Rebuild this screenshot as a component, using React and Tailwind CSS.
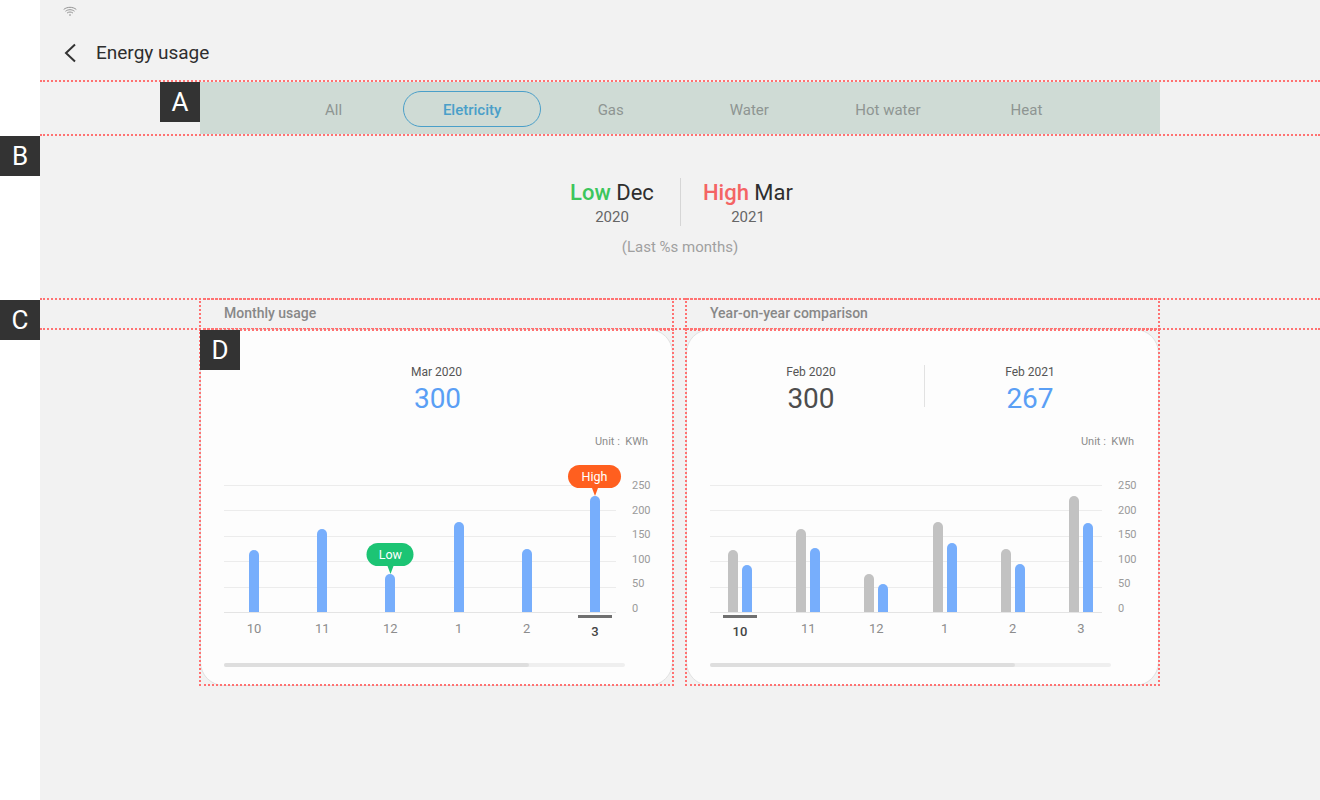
import React from 'react';

const tabs = ['All', 'Eletricity', 'Gas', 'Water', 'Hot water', 'Heat'];
const months = ['10', '11', '12', '1', '2', '3'];
const ticks = ['250', '200', '150', '100', '50', '0'];

// bar heights in px, measured up from the baseline
const usage = [62, 83, 38, 90, 63, 116];
const lastYear = [47, 64, 28, 69, 48, 89];

const Marker = ({ label, className, tailClass }) => (
  <div className="absolute bottom-full left-1/2 -translate-x-1/2 flex flex-col items-center">
    <div className={`h-[23px] rounded-full text-white text-[12.5px] leading-[23px] text-center ${className}`}>{label}</div>
    <div className={`w-0 h-0 border-x-[3px] border-x-transparent border-t-[8px] ${tailClass}`} />
  </div>
);

const Bar = ({ height, color, children }) => (
  <div className={`relative w-[10px] rounded-t-[5px] ${color}`} style={{ height }}>
    {children}
  </div>
);

const Chart = ({ selected, renderBars }) => (
  <div>
    <div className="flex justify-end pr-[1px] text-[11px] leading-[14px] text-[#8c8c8c] whitespace-pre">Unit :  KWh</div>
    <div className="flex h-[128px] mt-[36px]">
      <div className="relative w-[392px] h-[128px] shrink-0">
        <div className="absolute inset-0 flex flex-col justify-between">
          <div className="h-px bg-[#ececec]" />
          <div className="h-px bg-[#ececec]" />
          <div className="h-px bg-[#ececec]" />
          <div className="h-px bg-[#ececec]" />
          <div className="h-px bg-[#ececec]" />
          <div className="h-px bg-[#e4e4e4]" />
        </div>
        <div className="absolute inset-x-0 top-0 flex justify-between pl-[13px] pr-[4px]">
          {months.map((m, i) => (
            <div key={m} className="w-[34px] shrink-0 flex flex-col items-center">
              <div className="h-[127px] shrink-0 flex items-end justify-center gap-[4px]">{renderBars(i)}</div>
              <div className={`w-full h-[3px] mt-[3px] shrink-0 ${i === selected ? 'bg-[#707070]' : ''}`} />
              <div
                className={
                  i === selected
                    ? 'mt-[6px] text-[13px] leading-[16px] font-medium text-[#444444]'
                    : 'mt-[3px] text-[13px] leading-[16px] text-[#8c8c8c]'
                }
              >
                {m}
              </div>
            </div>
          ))}
        </div>
      </div>
      <div className="ml-[16px] h-[139px] -mt-[7px] shrink-0 flex flex-col justify-between text-[11px] leading-[16px] text-[#9a9a9a]">
        {ticks.map((t) => (
          <div key={t}>{t}</div>
        ))}
      </div>
    </div>
    <div className="mt-[50px] h-[4px] w-[401px] rounded-full bg-[#efefef]">
      <div className="h-full w-[305px] rounded-full bg-[#dedede]" />
    </div>
  </div>
);

const Stat = ({ date, value, valueClass }) => (
  <div className="flex flex-col items-center">
    <div className="text-[12px] leading-[16px] text-[#555555]">{date}</div>
    <div className={`text-[28px] leading-[36px] mt-[1px] ${valueClass}`}>{value}</div>
  </div>
);

const Card = ({ children }) => (
  <div className="relative w-[475px] h-[357px] outline-2 outline-dotted outline-[#ff7272] -outline-offset-2">
    <div className="h-full rounded-[24px] border border-[#e2e2e2] bg-[#fdfdfd] px-[23px] pt-[34px] ml-[1px] mr-[1px] mb-[1px] box-border">
      {children}
    </div>
  </div>
);

const SectionTitle = ({ children }) => (
  <div className="w-[475px] h-[32px] pl-[23px] border-2 border-dotted border-[#ff7272] text-[14px] leading-[27px] font-medium text-[#888888]">
    {children}
  </div>
);

const Tag = ({ children }) => (
  <div className="absolute w-[40px] h-[40px] bg-[#333333] text-white text-[26px] leading-[40px] text-center z-10">{children}</div>
);

export default function App() {
  return (
    <div className="relative flex h-[800px] w-[1320px] overflow-hidden bg-white font-['Roboto',sans-serif]">
      <div className="w-[40px] shrink-0 bg-white" />
      <div className="flex-1 bg-[#f2f2f2]">
        {/* status bar */}
        <div className="h-[24px] pl-[23px] pt-[6px]">
          <svg width="14" height="13" viewBox="0 0 14 13" fill="none" stroke="#8a8a8a" strokeWidth="0.9" strokeLinecap="round">
            <path d="M1 3.2C4.4 .6 9.6 .6 13 3.2" />
            <path d="M2.8 5C5.3 3.2 8.7 3.2 11.2 5" />
            <path d="M4.4 6.8C6 5.7 8 5.7 9.6 6.8" />
            <circle cx="7" cy="9" r="0.8" fill="#8a8a8a" stroke="none" />
          </svg>
        </div>

        {/* header */}
        <div className="h-[56px] pt-[2px] flex items-center pl-[23px]">
          <svg width="14" height="20" viewBox="0 0 14 20" fill="none" stroke="#333333" strokeWidth="2">
            <path d="M12 1.5 3 10l9 8.5" />
          </svg>
          <div className="ml-[19px] text-[19px] leading-[24px] text-[#2e2e2e]">Energy usage</div>
        </div>

        {/* tabs */}
        <div className="h-[56px] border-y-2 border-dotted border-[#ff7272]">
          <div className="ml-[160px] w-[960px] h-[52px] pt-[2px] bg-[#cfdbd5] flex items-center justify-center">
            {tabs.map((t) => (
              <div
                key={t}
                className={
                  t === 'Eletricity'
                    ? 'w-[138.6px] h-[36px] rounded-full border border-[#4a9fc9] text-[15px] leading-[36px] text-center font-medium text-[#4a9fc9]'
                    : 'w-[138.6px] h-[36px] text-[15px] leading-[38px] text-center text-[#8e9592]'
                }
              >
                {t}
              </div>
            ))}
          </div>
        </div>

        {/* summary */}
        <div className="h-[162px] pt-[43px] flex flex-col items-center">
          <div className="flex items-stretch">
            <div className="w-[135px] flex flex-col items-center">
              <div className="text-[22px] leading-[28px] text-[#2e2e2e]">
                <span className="font-medium text-[#3cc65c]">Low</span> Dec
              </div>
              <div className="mt-[1px] text-[15px] leading-[18px] text-[#666666]">2020</div>
            </div>
            <div className="w-px h-[48px] -mt-[1px] bg-[#d6d6d6]" />
            <div className="w-[135px] flex flex-col items-center">
              <div className="text-[22px] leading-[28px] text-[#2e2e2e]">
                <span className="font-medium text-[#f46464]">High</span> Mar
              </div>
              <div className="mt-[1px] text-[15px] leading-[18px] text-[#666666]">2021</div>
            </div>
          </div>
          <div className="mt-[12px] text-[15px] leading-[18px] text-[#a0a0a0]">(Last %s months)</div>
        </div>

        {/* section titles */}
        <div className="border-y-2 border-dotted border-[#ff7272] h-[32px] flex pl-[159px] gap-[11px] -mb-[1px]">
          <div className="-my-[2px]">
            <SectionTitle>Monthly usage</SectionTitle>
          </div>
          <div className="-my-[2px]">
            <SectionTitle>Year-on-year comparison</SectionTitle>
          </div>
        </div>

        {/* cards */}
        <div className="flex pl-[159px] gap-[11px]">
          <Card>
            <div className="flex justify-center">
              <Stat date="Mar 2020" value="300" valueClass="ml-[2px] text-[#5a9ff5]" />
            </div>
            <div className="mt-[18px]">
              <Chart
                selected={5}
                renderBars={(i) => (
                  <Bar height={usage[i]} color="bg-[#77aefc]">
                    {i === 2 && <Marker label="Low" className="w-[47px] bg-[#1cc474]" tailClass="border-t-[#1cc474]" />}
                    {i === 5 && <Marker label="High" className="w-[53px] mr-[1px] bg-[#ff5f1f]" tailClass="border-t-[#ff5f1f]" />}
                  </Bar>
                )}
              />
            </div>
          </Card>
          <Card>
            <div className="flex items-start">
              <div className="w-[214px] shrink-0 flex justify-center pr-[12px]">
                <Stat date="Feb 2020" value="300" valueClass="text-[#4d4d4d]" />
              </div>
              <div className="w-px h-[42px] mt-[1px] bg-[#e2e2e2]" />
              <div className="flex-1 flex justify-center">
                <Stat date="Feb 2021" value="267" valueClass="text-[#5a9ff5]" />
              </div>
            </div>
            <div className="mt-[18px]">
              <Chart
                selected={0}
                renderBars={(i) => (
                  <>
                    <Bar height={usage[i]} color="bg-[#c2c2c2]" />
                    <Bar height={lastYear[i]} color="bg-[#77aefc]" />
                  </>
                )}
              />
            </div>
          </Card>
        </div>
      </div>

      {/* annotation tags */}
      <div className="absolute left-[160px] top-[82px]"><Tag>A</Tag></div>
      <div className="absolute left-0 top-[136px]"><Tag>B</Tag></div>
      <div className="absolute left-0 top-[300px]"><Tag>C</Tag></div>
      <div className="absolute left-[200px] top-[330px]"><Tag>D</Tag></div>
    </div>
  );
}
